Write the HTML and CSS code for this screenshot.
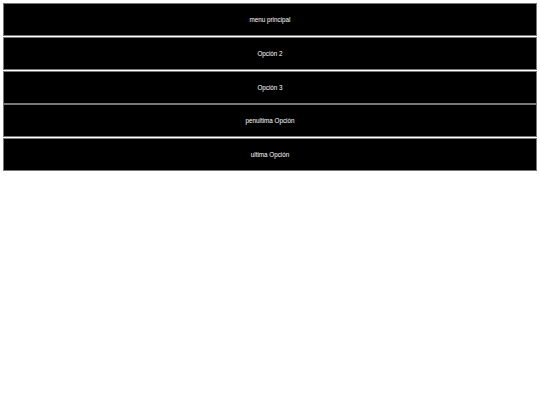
FILE: index.html
```html
<!DOCTYPE html>
<html>
  <head>
    <title>Menu</title>
    <link rel="stylesheet" href="styles.css">
  </head>
  <body>
    <ul class="menu">
      <li class="menu-item">menu principal</li>
      <li class="menu-item">Opción 2</li>
      <li class="menu-item">Opción 3</li>
      <li class="menu-item">penultima Opción</li>
      <li class="menu-item">ultima Opción</li>
    </ul>
  </body>
</html>
```

FILE: styles.css
```css
/* Menu list */
body {
  font-family: "Liberation Sans", Arial, sans-serif;
  background-color: #fff;
  margin: 3px;
}

.menu {
  list-style: none;
  margin: 0;
  padding: 0;
  display: flex;
  flex-direction: column;
  gap: 0.75px;
}

.menu-item {
  height: 31px;
  display: flex;
  align-items: center;
  justify-content: center;
  background-color: #000;
  color: #fff;
  font-size: 6.3px;
  border: 1px solid #777;
}
```
